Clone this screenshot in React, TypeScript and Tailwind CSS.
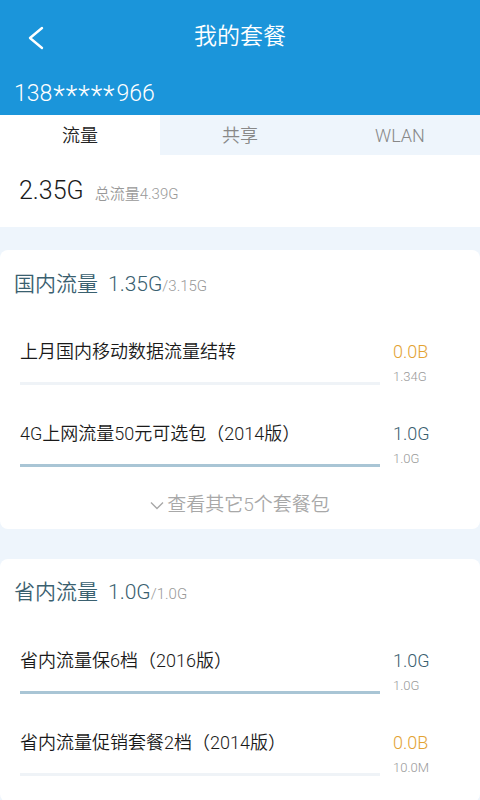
const FONT = "font-['Roboto','Noto_Sans_CJK_SC',sans-serif]";

type Pkg = { name: string; used: string; total: string; pct: number; warn?: boolean };

const DOMESTIC: Pkg[] = [
  { name: "上月国内移动数据流量结转", used: "0.0B", total: "1.34G", pct: 0, warn: true },
  { name: "4G上网流量50元可选包（2014版）", used: "1.0G", total: "1.0G", pct: 100 },
];

const PROVINCE: Pkg[] = [
  { name: "省内流量保6档（2016版）", used: "1.0G", total: "1.0G", pct: 100 },
  { name: "省内流量促销套餐2档（2014版）", used: "0.0B", total: "10.0M", pct: 0, warn: true },
];

function Row({ p, top }: { p: Pkg; top: string }) {
  return (
    <div className={`flex px-5 ${top}`}>
      <div className="w-[360px]">
        <div className="text-[18px] leading-[24px] text-[#1a1a1a]">{p.name}</div>
        <div className="mt-[18px] h-[3px] bg-[#eff3f7]">
          <div className="h-full bg-[#a9c5d5]" style={{ width: `${p.pct}%` }} />
        </div>
      </div>
      <div className="ml-[13px]">
        <div className={`text-[18px] leading-[24px] ${p.warn ? "text-[#e3a333]" : "text-[#3a606f]"}`}>
          {p.used}
        </div>
        <div className="mt-[5px] text-[13px] leading-[16px] text-[#999]">{p.total}</div>
      </div>
    </div>
  );
}

function CardTitle({ label, used, total }: { label: string; used: string; total: string }) {
  return (
    <div className="flex items-baseline px-[14px] leading-[28px] text-[#3a606f]">
      <span className="text-[21px]">{label}</span>
      <span className="ml-[10px] text-[21px]">{used}</span>
      <span className="text-[15px] text-[#999]">/{total}</span>
    </div>
  );
}

export default function App() {
  return (
    <div className={`h-[800px] w-[480px] overflow-hidden bg-[#eef5fc] font-[350] ${FONT}`}>
      <header className="h-[115px] bg-[#1b95da] text-white">
        <div className="relative flex h-[74px] items-center justify-center">
          <svg className="absolute left-[28px] top-[26px]" width="16" height="24" viewBox="0 0 16 24" fill="none">
            <polyline points="14,2 2,12 14,22" stroke="white" strokeWidth="2.4" strokeLinecap="round" strokeLinejoin="round" />
          </svg>
          <h1 className="text-[23px] font-[350]">我的套餐</h1>
        </div>
        <div className="mt-[3px] px-[14px] text-[23px] leading-[30px]">
          138
          <span className="relative top-[4px] px-[1px] text-[27px] tracking-[1px]">*****</span>
          966
        </div>
      </header>

      <nav className="grid h-[40px] grid-cols-3 text-[18px]">
        <div className="flex items-center justify-center bg-white text-[#222]">流量</div>
        <div className="flex items-center justify-center bg-[#eef5fc] text-[#888]">共享</div>
        <div className="flex items-center justify-center bg-[#eef5fc] text-[#888]">WLAN</div>
      </nav>

      <section className="flex h-[72px] items-baseline bg-white px-[19px] pt-[20px]">
        <span className="text-[25px] leading-[32px] text-[#1a1a1a]">2.35G</span>
        <span className="ml-[11px] text-[15px] text-[#999]">总流量4.39G</span>
      </section>

      <div className="mt-[23px] rounded-[8px] bg-white pt-[20px] pb-[10px]">
        <CardTitle label="国内流量" used="1.35G" total="3.15G" />
        <Row p={DOMESTIC[0]} top="mt-[40px]" />
        <Row p={DOMESTIC[1]} top="mt-[37px]" />
        <div className="mt-[24px] flex items-center justify-center text-[19px] leading-[28px] text-[#a8a8a8]">
          <svg className="mr-[3px]" width="14" height="9" viewBox="0 0 14 9" fill="none">
            <polyline points="1,1.5 7,7.5 13,1.5" stroke="#a8a8a8" strokeWidth="1.4" />
          </svg>
          查看其它5个套餐包
        </div>
      </div>

      <div className="mt-[30px] rounded-[8px] bg-white pt-[19px] pb-[26px]">
        <CardTitle label="省内流量" used="1.0G" total="1.0G" />
        <Row p={PROVINCE[0]} top="mt-[41px]" />
        <Row p={PROVINCE[1]} top="mt-[37px]" />
      </div>
    </div>
  );
}
